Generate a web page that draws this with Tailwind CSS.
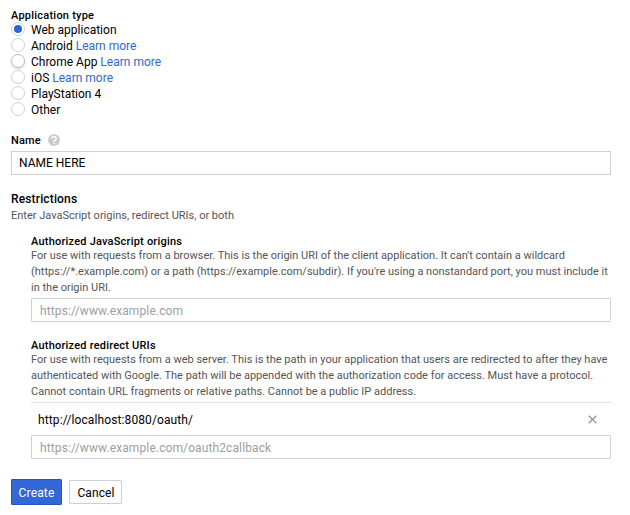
<!DOCTYPE html>
<html lang="en"><head><meta charset="utf-8"><title>Create client ID</title>
<script src="https://cdn.jsdelivr.net/npm/@tailwindcss/browser@4"></script></head>
<body class="bg-white font-[Roboto,sans-serif] text-[12px] leading-4 text-black">
<form class="flex h-[515px] w-[630px] flex-col overflow-hidden pt-2 pr-[19px] pl-[11px]">
<h2 class="h-[14px] text-[11px] leading-[15px] font-medium tracking-[0.23px]">Application type</h2>
<div class="flex flex-col">
<label class="flex h-4 items-start gap-[6px]"><span class="flex size-[14px] items-center justify-center rounded-full border border-[#d0d0d0]"><i class="size-2 rounded-full bg-[#2a62d8]"></i></span><span>Web application</span></label>
<label class="flex h-4 items-start gap-[6px]"><span class="size-[14px] rounded-full border border-[#d0d0d0]"></span><span>Android <a class="text-[#3367d6]">Learn more</a></span></label>
<label class="flex h-4 items-start gap-[6px]"><span class="size-[14px] rounded-full border border-[#bcbcbc] shadow-[0_1px_2px_rgba(0,0,0,0.2)]"></span><span>Chrome App <a class="text-[#3367d6]">Learn more</a></span></label>
<label class="flex h-4 items-start gap-[6px]"><span class="size-[14px] rounded-full border border-[#d0d0d0]"></span><span>iOS <a class="text-[#3367d6]">Learn more</a></span></label>
<label class="flex h-4 items-start gap-[6px]"><span class="size-[14px] rounded-full border border-[#d0d0d0]"></span><span>PlayStation 4</span></label>
<label class="flex h-4 items-start gap-[6px]"><span class="size-[14px] rounded-full border border-[#d0d0d0]"></span><span>Other</span></label>
</div>
<div class="mt-[15px] flex h-4 items-start gap-[7px] text-[11px] font-medium tracking-[0.15px]"><span>Name</span><svg class="mt-px size-3" viewBox="0 0 12 12"><circle cx="6" cy="6" r="6" fill="#cbcbcb"/><path d="M3.9 4.6a2.1 2.1 0 1 1 3.3 1.7Q6 7 6 8" fill="none" stroke="#fff" stroke-width="1.5"/><path d="M5.3 8.7h1.5v1.5H5.3z" fill="#fff"/></svg></div>
<div class="mt-[2px] flex h-6 shrink-0 items-center border border-[#d0d0d0] px-[7px]">NAME HERE</div>
<h2 class="mt-4 font-medium tracking-[0.15px]">Restrictions</h2>
<p class="mt-[1px] text-[11px] text-[#555]">Enter JavaScript origins, redirect URIs, or both</p>
<section class="mt-[11px] ml-5">
<h3 class="h-[13px] text-[11px] leading-[14px] font-medium tracking-[0.21px]">Authorized JavaScript origins</h3>
<p class="text-[11px] text-[#555]">For use with requests from a browser. This is the origin URI of the client application. It can't contain a wildcard<br>(https://*.example.com) or a path (https://example.com/subdir). If you're using a nonstandard port, you must include it<br>in the origin URI.</p>
<div class="mt-[2px] flex h-6 items-center rounded-[1px] border border-[#d0d0d0] px-2 pt-[2px] tracking-[0.11px] text-[#9e9e9e]">https://www.example.com</div>
</section>
<section class="mt-[17px] ml-5">
<h3 class="h-[13px] text-[11px] leading-[14px] font-medium tracking-[0.21px]">Authorized redirect URIs</h3>
<p class="text-[11px] text-[#555]">For use with requests from a web server. This is the path in your application that users are redirected to after they have<br>authenticated with Google. The path will be appended with the authorization code for access. Must have a protocol.<br>Cannot contain URL fragments or relative paths. Cannot be a public IP address.</p>
<div class="mt-[2px] flex h-[33px] items-center justify-between border-t border-[#e0e0e0] pr-[14px] pl-[7px]"><span class="pt-[2px] tracking-[0.11px]">http://localhost:8080/oauth/</span><svg class="size-[9px]" viewBox="0 0 9 9"><path d="M.7.7l7.6 7.6m0-7.6L.7 8.3" stroke="#999" stroke-width="1.4"/></svg></div>
<div class="flex h-6 items-center rounded-[1px] border border-[#d0d0d0] px-2 pt-[2px] tracking-[0.11px] text-[#9e9e9e]">https://www.example.com/oauth2callback</div>
</section>
<div class="mt-5 flex items-center gap-[7px]"><button type="button" class="h-[26px] w-[51px] rounded-[1px] border border-[#1f56c9] bg-[#3367d6] pt-[2px] tracking-[0.15px] text-white">Create</button><button type="button" class="h-6 w-[53px] rounded-[1px] border border-[#d0d0d0] bg-linear-to-b from-white to-[#fafafa] pt-[2px] pl-px tracking-[0.1px]">Cancel</button></div>
</form></body></html>
